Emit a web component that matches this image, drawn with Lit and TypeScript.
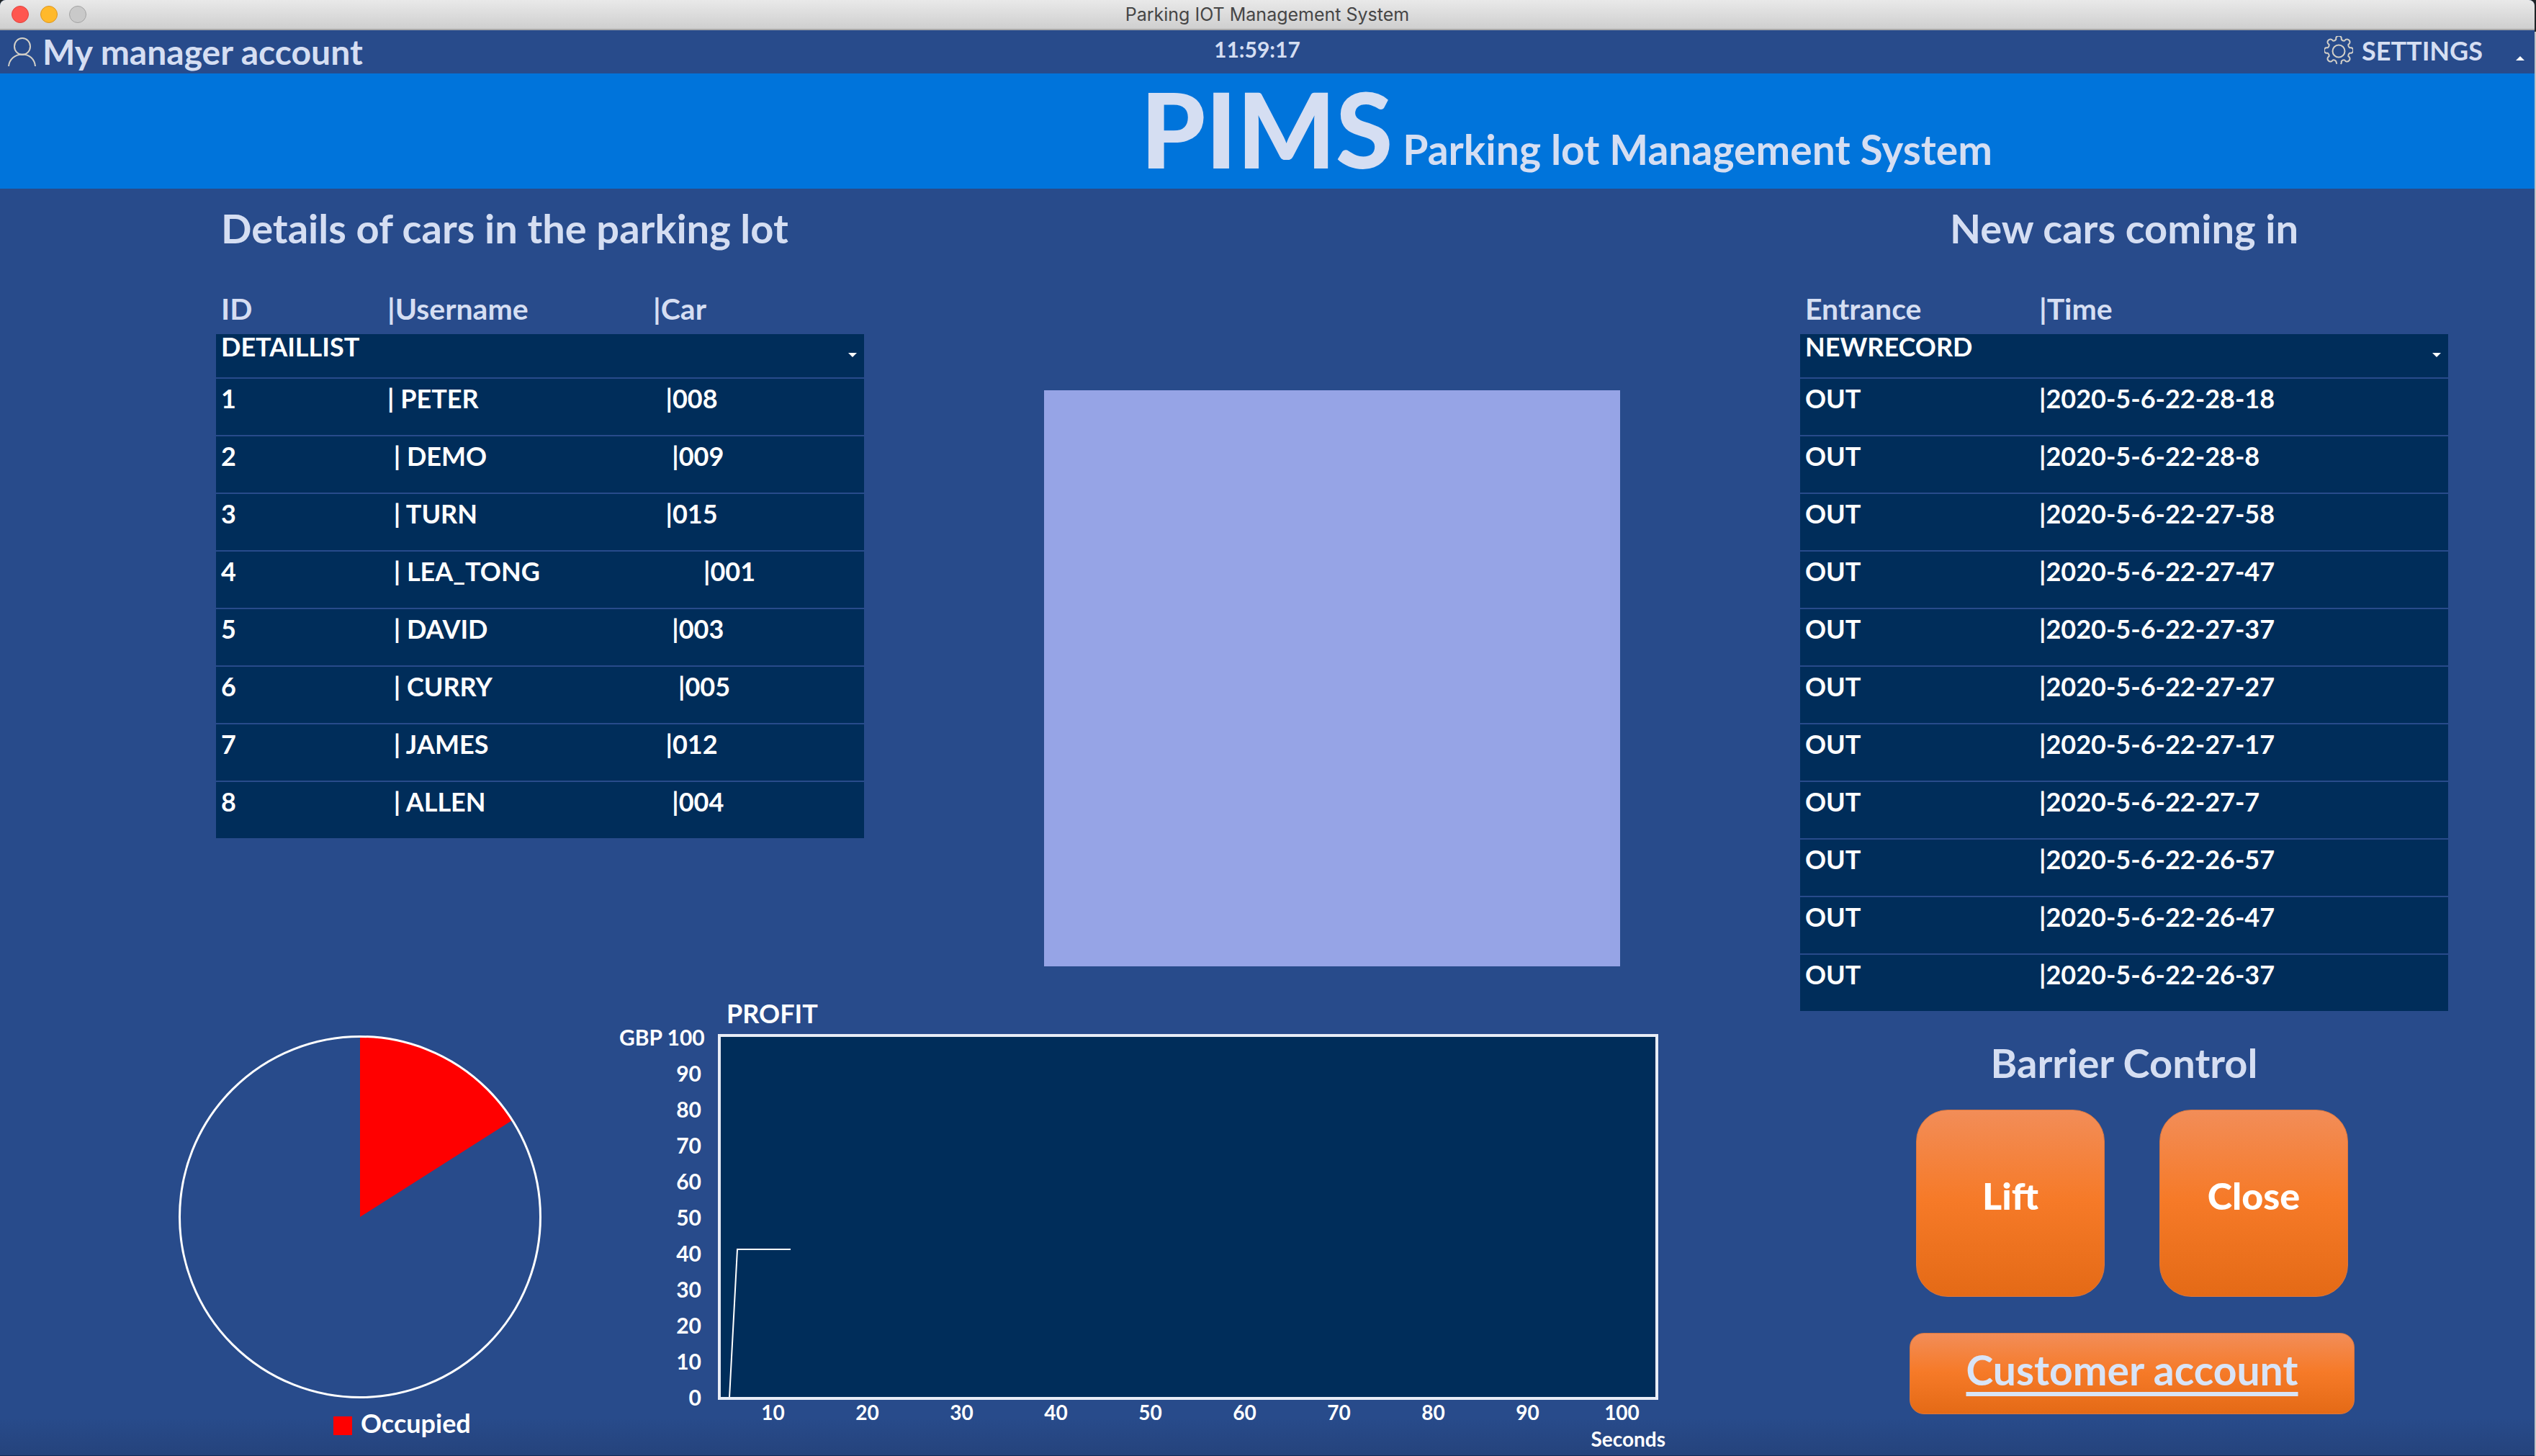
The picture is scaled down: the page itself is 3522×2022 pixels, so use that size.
import { LitElement, html, svg, css } from "lit";
import { customElement } from "lit/decorators.js";

interface ParkedCar {
  id: string;
  user: string;
  car: string;
}

const PARKED: ParkedCar[] = [
  { id: "1", user: "| PETER", car: "  |008" },
  { id: "2", user: " | DEMO", car: "   |009" },
  { id: "3", user: " | TURN", car: "  |015" },
  { id: "4", user: " | LEA_TONG", car: "        |001" },
  { id: "5", user: " | DAVID", car: "   |003" },
  { id: "6", user: " | CURRY", car: "    |005" },
  { id: "7", user: " | JAMES", car: "  |012" },
  { id: "8", user: " | ALLEN", car: "   |004" },
];

const RECORDS = [
  "28-18", "28-8", "27-58", "27-47", "27-37", "27-27",
  "27-17", "27-7", "26-57", "26-47", "26-37",
].map((t) => ({ gate: "OUT", time: `|2020-5-6-22-${t}` }));

const PROFIT_TICKS = ["GBP 100", "90", "80", "70", "60", "50", "40", "30", "20", "10", "0"];
const SECOND_TICKS = ["10", "20", "30", "40", "50", "60", "70", "80", "90", "100"];
const OCCUPIED = 0.16;

function slicePath(share: number, c: number, r: number): string {
  const a = share * 2 * Math.PI;
  const x = c + r * Math.sin(a);
  const y = c - r * Math.cos(a);
  return `M${c} ${c}V${c - r}A${r} ${r} 0 ${share > 0.5 ? 1 : 0} 1 ${x} ${y}Z`;
}

// Eight rounded teeth joined by notches, open at the foot.
function gearPath(): string {
  const pt = (deg: number, r: number) => {
    const a = (deg * Math.PI) / 180;
    return `${(20 + r * Math.sin(a)).toFixed(2)} ${(20 - r * Math.cos(a)).toFixed(2)}`;
  };
  let d = `M${pt(188, 19)}`;
  for (let i = 0; i < 8; i++) {
    const base = 180 + i * 45;
    if (i > 0) d += `A4 4 0 0 1 ${pt(base + 12, 18)}`;
    d += `L${pt(base + 14, 15.6)}A4.6 4.6 0 0 0 ${pt(base + 31, 15.6)}`;
    d += `L${pt(base + 33, 18)}`;
    if (i === 7) d += `L${pt(base + 37, 19)}`;
  }
  return d;
}

@customElement("app-root")
export class AppRoot extends LitElement {
  static styles = css`
    :host {
      --panel: #284b8b;
      --field: #002d5a;
      --pale: #d5def2;
      display: block;
      background: linear-gradient(#1f2426 44px, #c4c4c4 44px);
      padding-right: 2px;
      font-family: Lato, "Open Sans", sans-serif;
      font-weight: 700;
      color: #fff;
    }
    * { box-sizing: border-box; }
    .window {
      min-height: 100vh;
      background: linear-gradient(to top, #25437c, #284b8b 52px);
      border-bottom: 1px solid #142b56;
      border-radius: 8px 8px 0 0;
    }
    .titlebar {
      display: grid;
      grid-template-columns: 1fr auto 1fr;
      align-items: center;
      height: 42px;
      padding: 0 16px;
      background: linear-gradient(#e9e9e9, #cfcfcf);
      border-bottom: 2px solid #a9a9a9;
      border-radius: 8px 8px 0 0;
      color: #464646;
      font: 400 25px/40px Inter, Roboto, sans-serif;
    }
    .lights { display: flex; gap: 16px; }
    .light {
      width: 24px;
      height: 24px;
      border-radius: 50%;
      border: 1px solid #e0443e;
      background: #ff564f;
    }
    .light.min { background: #ffb92b; border-color: #dd9620; }
    .light.max { background: #c9c9c9; border-color: #a3a3a3; }
    .toolbar {
      display: grid;
      grid-template-columns: minmax(0, 1686fr) minmax(0, 1834fr);
      height: 60px;
      color: var(--pale);
    }
    a, button { font: inherit; color: inherit; }
    button { border: 0; padding: 0; background: none; cursor: pointer; }
    .account {
      display: flex;
      align-items: center;
      gap: 9px;
      justify-self: start;
      padding-left: 10px;
      font-size: 48px;
      line-height: 60px;
      text-decoration: none;
    }
    .icon {
      width: 40px;
      height: 40px;
      fill: none;
      stroke: #d3d0c8;
      stroke-width: 2;
    }
    .right { display: flex; justify-content: space-between; }
    .clock { font-size: 30px; line-height: 52px; }
    .settings {
      display: flex;
      align-items: center;
      gap: 12px;
      padding: 0 14px 4px 0;
      font-size: 36px;
    }
    .caret { width: 12px; height: 6px; fill: #fff; }
    .settings .caret { margin: 22px 0 0 34px; }
    .banner {
      display: grid;
      grid-template-columns: minmax(0, 1584fr) minmax(0, 1936fr);
      height: 160px;
      background: #0074db;
      color: var(--pale);
    }
    .brand {
      grid-column: 2;
      display: flex;
      align-items: center;
      gap: 14px;
      margin: 0;
      padding-bottom: 6px;
      font-size: 57px;
      line-height: 76px;
      white-space: nowrap;
    }
    .brand strong { font-size: 144px; }
    .brand span { margin-top: 56px; }
    main {
      display: grid;
      grid-template-columns: minmax(0, 2250fr) minmax(0, 900fr);
      column-gap: 250px;
      padding-right: 120px;
    }
    .overview {
      display: grid;
      grid-template-columns: minmax(0, 900fr) minmax(0, 800fr);
      column-gap: 250px;
      padding-left: 300px;
    }
    .feed { align-self: start; }
    h2 {
      margin: 0;
      color: var(--pale);
      font-size: 56px;
      line-height: 70px;
      white-space: nowrap;
    }
    .list h2 { padding: 20px 7px 0; margin-bottom: 42px; }
    .entries h2 { text-align: center; }
    table {
      width: 100%;
      table-layout: fixed;
      border-spacing: 0;
      text-align: left;
      font-size: 36px;
      white-space: pre;
    }
    .c-id { width: 238px; }
    .c-user { width: 369px; }
    .c-gate { width: 332px; }
    th, td { padding: 0; vertical-align: top; }
    th:first-child, td:first-child { padding-left: 7px; }
    .labels th {
      height: 70px;
      color: var(--pale);
      font-size: 41px;
      line-height: 69px;
    }
    td, .bar {
      background: var(--field);
      border-bottom: 2px solid var(--panel);
    }
    td { height: 80px; line-height: 55px; }
    tr:last-child td { height: 78px; border-bottom: 0; }
    .bar { height: 62px; line-height: 35px; }
    .bar button {
      display: flex;
      align-items: center;
      justify-content: space-between;
      width: 100%;
      padding-right: 10px;
    }
    .bar .caret { margin-top: 22px; }
    .camera {
      margin-top: 280px;
      align-self: start;
      aspect-ratio: 1;
      background: #96a4e6;
    }
    .stats {
      display: grid;
      grid-template-columns: minmax(0, 504fr) minmax(0, 1458fr);
      column-gap: 108px;
      margin: 36px -68px 0 248px;
    }
    .pie { margin: 60px 0 0; }
    .pie svg { display: block; width: 100%; }
    .pie circle { fill: none; stroke: #fff; stroke-width: 3; }
    .slice { fill: #f00; }
    .legend {
      display: flex;
      align-items: center;
      gap: 12px;
      padding-left: 215px;
      font-size: 36px;
      line-height: 68px;
    }
    .swatch { width: 26px; height: 26px; margin-top: 8px; background: #f00; }
    .chart {
      margin: 0;
      display: grid;
      grid-template-columns: 137px minmax(0, 1fr);
      font-size: 28px;
    }
    .chart figcaption {
      grid-column: 2;
      padding-left: 12px;
      font-size: 36px;
      line-height: 58px;
    }
    .yaxis {
      margin: -21px 0;
      padding-right: 23px;
      font-size: 30px;
      line-height: 50px;
      text-align: right;
      white-space: nowrap;
    }
    .plot {
      height: 508px;
      margin-right: 15px;
      border: 4px solid #e8edf6;
      background: var(--field);
    }
    .plot svg { display: block; width: 100%; height: 100%; }
    .trace { fill: none; stroke: #fff; stroke-width: 2; }
    .xaxis {
      grid-column: 2;
      display: grid;
      grid-template-columns: repeat(10, 1fr);
      padding-left: 11px;
      line-height: 34px;
      text-align: center;
    }
    .unit {
      grid-column: 2;
      padding-right: 5px;
      line-height: 41px;
      text-align: right;
    }
    .barrier {
      display: grid;
      justify-content: center;
      justify-items: center;
      padding-top: 37px;
    }
    .pair { display: flex; gap: 76px; padding: 30px 0 50px; margin-left: 22px; }
    .orange {
      background: linear-gradient(#f28d58, #f67a28 48%, #e46a16);
      border: 1px solid #d9773f;
    }
    .square {
      width: 262px;
      height: 260px;
      padding-bottom: 22px;
      border-radius: 44px;
      font-size: 52px;
      font-weight: 900;
    }
    .customer {
      width: 618px;
      height: 113px;
      margin-left: 22px;
      border-radius: 20px;
      color: #d8e4f7;
      font-size: 57px;
      line-height: 100px;
      text-align: center;
      text-decoration: underline;
      text-decoration-thickness: 6px;
      text-underline-offset: 9px;
    }
  `;

  private caret(up: boolean) {
    return html`<svg class="caret" viewBox="0 0 12 6" aria-hidden="true">
      <path d=${up ? "M0 6L6 0L12 6Z" : "M0 0H12L6 6Z"}></path>
    </svg>`;
  }

  render() {
    return html`
      <div class="window">
        <header>
          <div class="titlebar">
            <div class="lights">
              <span class="light"></span><span class="light min"></span><span class="light max"></span>
            </div>
            <span>Parking IOT Management System</span>
          </div>
          <div class="toolbar">
            <a class="account" href="#account">
              <svg class="icon" viewBox="0 0 40 40" aria-hidden="true">
                <ellipse cx="21" cy="12.5" rx="11" ry="11.5"></ellipse>
                <path d="M2 40C3 30 11 23.5 21 23.5S38 30 39 40"></path>
              </svg>
              My manager account
            </a>
            <div class="right">
              <time class="clock">11:59:17</time>
              <button class="settings" type="button">
                <svg class="icon" viewBox="0 0 40 40" aria-hidden="true">
                  <path d=${gearPath()}></path>
                  <circle cx="20" cy="21" r="8.5"></circle>
                </svg>
                SETTINGS ${this.caret(true)}
              </button>
            </div>
          </div>
          <div class="banner">
            <h1 class="brand"><strong>PIMS</strong><span>Parking lot Management System</span></h1>
          </div>
        </header>
        <main>
          <div>
            <div class="overview">
              <section class="list feed">
                <h2>Details of cars in the parking lot</h2>
                <table>
                  <colgroup><col class="c-id" /><col class="c-user" /><col /></colgroup>
                  <thead>
                    <tr class="labels"><th>ID</th><th>|Username</th><th>|Car</th></tr>
                    <tr><th class="bar" colspan="3"><button type="button">DETAILLIST${this.caret(false)}</button></th></tr>
                  </thead>
                  <tbody>
                    ${PARKED.map((r) => html`<tr><td>${r.id}</td><td>${r.user}</td><td>${r.car}</td></tr>`)}
                  </tbody>
                </table>
              </section>
              <div class="camera"></div>
            </div>
            <div class="stats">
              <figure class="pie">
                <svg viewBox="0 0 504 504" role="img" aria-label="Occupied">
                  <path class="slice" d=${slicePath(OCCUPIED, 252, 250)}></path>
                  <circle cx="252" cy="252" r="250.5"></circle>
                </svg>
                <figcaption class="legend"><span class="swatch"></span>Occupied</figcaption>
              </figure>
              <figure class="chart">
                <figcaption>PROFIT</figcaption>
                <div class="yaxis">${PROFIT_TICKS.map((t) => html`<div>${t}</div>`)}</div>
                <div class="plot">
                  <svg viewBox="0 0 1298 500" preserveAspectRatio="none" aria-hidden="true">
                    ${svg`<path class="trace" d="M12 501L23 295H97"></path>`}
                  </svg>
                </div>
                <div class="xaxis">${SECOND_TICKS.map((t) => html`<span>${t}</span>`)}</div>
                <div class="unit">Seconds</div>
              </figure>
            </div>
          </div>
          <div>
            <section class="list entries">
              <h2>New cars coming in</h2>
              <table>
                <colgroup><col class="c-gate" /><col /></colgroup>
                <thead>
                  <tr class="labels"><th>Entrance</th><th>|Time</th></tr>
                  <tr><th class="bar" colspan="2"><button type="button">NEWRECORD${this.caret(false)}</button></th></tr>
                </thead>
                <tbody>
                  ${RECORDS.map((r) => html`<tr><td>${r.gate}</td><td>${r.time}</td></tr>`)}
                </tbody>
              </table>
            </section>
            <section class="barrier">
              <h2>Barrier Control</h2>
              <div class="pair">
                <button class="orange square" type="button">Lift</button>
                <button class="orange square" type="button">Close</button>
              </div>
              <a class="orange customer" href="#customer">Customer account</a>
            </section>
          </div>
        </main>
      </div>
    `;
  }
}
